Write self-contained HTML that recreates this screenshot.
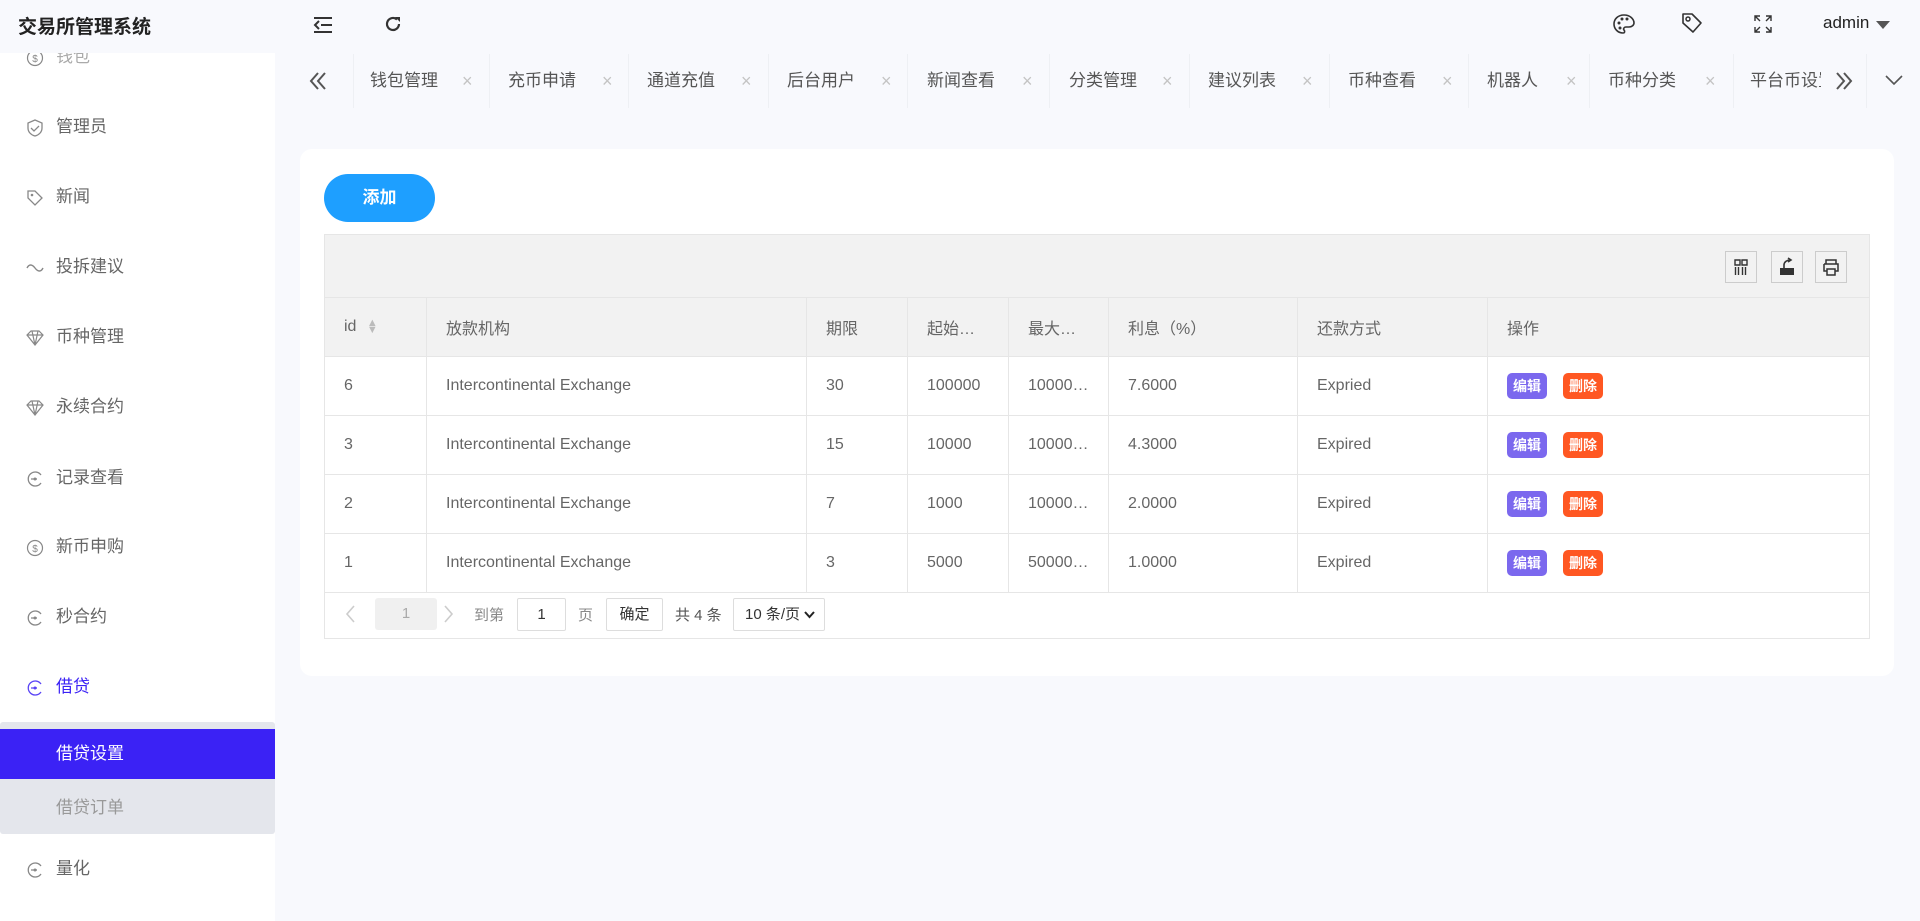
<!DOCTYPE html>
<html><head><meta charset="utf-8"><style>
*{box-sizing:border-box;margin:0;padding:0}
body{width:1920px;height:921px;overflow:hidden;background:#f8f9fd;font-family:"Liberation Sans","Noto Sans CJK SC",sans-serif;color:#333;position:relative}
.abs{position:absolute}
#hdr{left:0;top:0;width:1920px;height:53px;background:#f8f9fd}
#side{left:0;top:53px;width:275px;height:868px;background:#fff;overflow:hidden}
.mi{position:absolute;left:0;width:275px;height:40px;line-height:40px;font-size:17px;color:#666}
.mi svg{position:absolute;left:26px;top:12px}
.mi span{position:absolute;left:56px}
.tab{position:absolute;top:54px;height:54px;line-height:54px;font-size:17px;color:#555;border-left:1px solid #eef0f4}
.tab .x{position:absolute;color:#c4c4c4;font-size:18px}
#card{left:300px;top:149px;width:1594px;height:527px;background:#fff;border-radius:12px}
table{border-collapse:collapse;position:absolute;left:324px;top:297px;width:1546px;font-size:16px;color:#666}
td,th{border:1px solid #e6e6e6;height:59px;padding-left:19px;text-align:left;font-weight:normal;white-space:nowrap}
th{background:#f2f2f2;color:#666}
.b{display:inline-block;color:#fff;font-size:14px;font-weight:bold;border-radius:5px;height:26px;line-height:26px;padding:0 6px;margin-right:16px}
</style></head><body>
<div id="hdr" class="abs">
 <div class="abs" style="left:18px;top:12px;font-size:19px;font-weight:bold;color:#222">交易所管理系统</div>
 <svg class="abs" style="left:313px;top:16px" width="20" height="18" viewBox="0 0 20 18"><path d="M1 2h18M8 9h11M1 16h18M6 5L2 9l4 4" stroke="#333" stroke-width="2" fill="none"/></svg>
 <svg class="abs" style="left:383px;top:14px" width="20" height="20" viewBox="0 0 20 20"><path d="M16 10a6 6 0 1 1-2-4.5" stroke="#333" stroke-width="2.2" fill="none"/><path d="M12 3h5v5z" fill="#333"/></svg>
 <svg class="abs" style="left:1612px;top:13px" width="24" height="22" viewBox="0 0 24 22"><path d="M12 2C6 2 2 6 2 11s4 9 9 9c2 0 2-2 1-3s0-3 2-3h3c3 0 5-2 5-4 0-4-4-8-10-8z" stroke="#333" stroke-width="1.6" fill="none"/><circle cx="7" cy="10" r="1.5" fill="#333"/><circle cx="10" cy="6" r="1.5" fill="#333"/><circle cx="15" cy="6" r="1.5" fill="#333"/><circle cx="8" cy="15" r="1.5" fill="#333"/></svg>
 <svg class="abs" style="left:1681px;top:12px" width="22" height="24" viewBox="0 0 22 24"><path d="M2 2h9l9 9-8 9-10-9z" stroke="#333" stroke-width="1.6" fill="none" stroke-linejoin="round"/><circle cx="7" cy="7" r="2" stroke="#333" stroke-width="1.5" fill="none"/></svg>
 <svg class="abs" style="left:1754px;top:15px" width="18" height="18" viewBox="0 0 18 18"><path d="M1 6V1h5M1 1l5 5M17 6V1h-5M17 1l-5 5M1 12v5h5M1 17l5-5M17 12v5h-5M17 17l-5-5" stroke="#333" stroke-width="1.4" fill="none"/></svg>
 <div class="abs" style="left:1823px;top:13px;font-size:17px;color:#222">admin</div>
 <div class="abs" style="left:1876px;top:21px;border:7px solid transparent;border-top:8px solid #555"></div>
</div>
<div id="side" class="abs">
 <div class="mi" style="top:-16px"><svg width="18" height="18"><circle cx="9" cy="9" r="7.5" stroke="#888" stroke-width="1.2" fill="none"/><text x="9" y="13" font-size="10" text-anchor="middle" fill="#888">$</text></svg><span style="color:#aaa">钱包</span></div>
 <div class="mi" style="top:54px"><svg width="18" height="18"><path d="M9 1l7 3v5c0 4-3 7-7 8-4-1-7-4-7-8V4z M5 9l3 3 5-5" stroke="#888" stroke-width="1.3" fill="none"/></svg><span>管理员</span></div>
 <div class="mi" style="top:124px"><svg width="18" height="18"><path d="M2 2h7l7 7-7 7-7-7z" stroke="#888" stroke-width="1.3" fill="none"/><circle cx="6" cy="6" r="1.3" fill="#888"/></svg><span>新闻</span></div>
 <div class="mi" style="top:194px"><svg width="18" height="18"><path d="M1 9c2-4 5-4 8 0s6 4 8 0" stroke="#888" stroke-width="1.4" fill="none"/></svg><span>投拆建议</span></div>
 <div class="mi" style="top:264px"><svg width="18" height="18"><path d="M1 6l4-4h8l4 4-8 10zM1 6h16M6 2l3 14 3-14" stroke="#888" stroke-width="1.2" fill="none"/></svg><span>币种管理</span></div>
 <div class="mi" style="top:334px"><svg width="18" height="18"><path d="M1 6l4-4h8l4 4-8 10zM1 6h16M6 2l3 14 3-14" stroke="#888" stroke-width="1.2" fill="none"/></svg><span>永续合约</span></div>
 <div class="mi" style="top:405px"><svg width="18" height="18"><path d="M15 5A7 7 0 1 0 15 13M5 9h6" stroke="#888" stroke-width="1.3" fill="none"/><circle cx="9" cy="9" r="1.5" fill="#888"/></svg><span>记录查看</span></div>
 <div class="mi" style="top:474px"><svg width="18" height="18"><circle cx="9" cy="9" r="7.5" stroke="#888" stroke-width="1.2" fill="none"/><text x="9" y="13" font-size="10" text-anchor="middle" fill="#888">$</text></svg><span>新币申购</span></div>
 <div class="mi" style="top:544px"><svg width="18" height="18"><path d="M15 5A7 7 0 1 0 15 13M5 9h6" stroke="#888" stroke-width="1.3" fill="none"/><circle cx="9" cy="9" r="1.5" fill="#888"/></svg><span>秒合约</span></div>
 <div class="mi" style="top:614px;color:#3b22f5"><svg width="18" height="18"><path d="M15 5A7 7 0 1 0 15 13M5 9h6" stroke="#5a44f5" stroke-width="1.3" fill="none"/><circle cx="9" cy="9" r="1.5" fill="#5a44f5"/></svg><span>借贷</span></div>
 <div class="abs" style="left:0;top:669px;width:275px;height:112px;background:#e4e6ec;border-radius:3px"></div>
 <div class="abs" style="left:0;top:676px;width:275px;height:50px;background:#3b22f5"></div>
 <div class="mi" style="top:681px;color:#fff"><span>借贷设置</span></div>
 <div class="mi" style="top:735px;color:#999"><span>借贷订单</span></div>
 <div class="mi" style="top:796px"><svg width="18" height="18"><path d="M15 5A7 7 0 1 0 15 13M5 9h6" stroke="#888" stroke-width="1.3" fill="none"/><circle cx="9" cy="9" r="1.5" fill="#888"/></svg><span>量化</span></div>
</div>
<!-- tabs -->
<svg class="abs" style="left:308px;top:71px" width="20" height="20"><path d="M10 2L3 10l7 8M17 2l-7 8 7 8" stroke="#555" stroke-width="2" fill="none"/></svg>
<div class="tab" style="left:353px;width:136px"><span style="position:absolute;left:16px">钱包管理</span><span class="x" style="left:108px">×</span></div>
<div class="tab" style="left:489px;width:139px"><span style="position:absolute;left:18px">充币申请</span><span class="x" style="left:112px">×</span></div>
<div class="tab" style="left:628px;width:140px"><span style="position:absolute;left:18px">通道充值</span><span class="x" style="left:112px">×</span></div>
<div class="tab" style="left:768px;width:139px"><span style="position:absolute;left:18px">后台用户</span><span class="x" style="left:112px">×</span></div>
<div class="tab" style="left:907px;width:142px"><span style="position:absolute;left:19px">新闻查看</span><span class="x" style="left:114px">×</span></div>
<div class="tab" style="left:1049px;width:140px"><span style="position:absolute;left:19px">分类管理</span><span class="x" style="left:112px">×</span></div>
<div class="tab" style="left:1189px;width:140px"><span style="position:absolute;left:18px">建议列表</span><span class="x" style="left:112px">×</span></div>
<div class="tab" style="left:1329px;width:139px"><span style="position:absolute;left:18px">币种查看</span><span class="x" style="left:112px">×</span></div>
<div class="tab" style="left:1468px;width:121px"><span style="position:absolute;left:18px">机器人</span><span class="x" style="left:97px">×</span></div>
<div class="tab" style="left:1589px;width:144px"><span style="position:absolute;left:18px">币种分类</span><span class="x" style="left:115px">×</span></div>
<div class="tab" style="left:1733px;width:88px;overflow:hidden"><span style="position:absolute;left:16px;white-space:nowrap">平台币设置</span></div>
<div class="abs" style="left:1821px;top:54px;width:45px;height:54px;background:#f8f9fd"></div>
<svg class="abs" style="left:1834px;top:71px" width="20" height="20"><path d="M3 2l7 8-7 8M10 2l7 8-7 8" stroke="#555" stroke-width="2" fill="none"/></svg>
<div class="abs" style="left:1866px;top:54px;height:54px;border-left:1px solid #eef0f4"></div>
<svg class="abs" style="left:1885px;top:74px" width="18" height="12"><path d="M1 2l8 8 8-8" stroke="#555" stroke-width="1.6" fill="none"/></svg>
<!-- card -->
<div id="card" class="abs"></div>
<div class="abs" style="left:324px;top:174px;width:111px;height:48px;border-radius:24px;background:#1e9fff;color:#fff;font-size:17px;font-weight:bold;text-align:center;line-height:48px">添加</div>
<div class="abs" style="left:324px;top:234px;width:1546px;height:64px;background:#f2f2f2;border:1px solid #e6e6e6"></div>
<div class="abs" style="left:1725px;top:251px;width:32px;height:32px;border:1px solid #ccc"><svg width="30" height="30"><path d="M9 8h5v5H9zM16 8h5v5h-5zM9.5 15v8M12.5 15v8M16.5 15v8M19.5 15v8" stroke="#333" stroke-width="1.4" fill="none"/></svg></div>
<div class="abs" style="left:1771px;top:251px;width:32px;height:32px;border:1px solid #ccc"><svg width="30" height="30"><path d="M8 16h14v7H8z" fill="#333"/><path d="M12 16v-3c0-3 3-5 6-5M16 6l3 2-3 2" stroke="#333" stroke-width="1.6" fill="none"/></svg></div>
<div class="abs" style="left:1815px;top:251px;width:32px;height:32px;border:1px solid #ccc"><svg width="30" height="30"><path d="M10 12V8h10v4M8 12h14v7h-3M11 19H8v-7M11 17h8v6h-8z" stroke="#333" stroke-width="1.5" fill="none"/></svg></div>
<table>
<colgroup><col style="width:102px"><col style="width:380px"><col style="width:101px"><col style="width:101px"><col style="width:100px"><col style="width:189px"><col style="width:190px"><col></colgroup>
<tr><th style="height:58px">id <span style="color:#bbb;font-size:11px;display:inline-block;line-height:7px;vertical-align:middle;margin-left:6px">▲<br>▼</span></th><th>放款机构</th><th>期限</th><th>起始…</th><th>最大…</th><th>利息（%）</th><th>还款方式</th><th>操作</th></tr>
<tr><td>6</td><td>Intercontinental Exchange</td><td>30</td><td>100000</td><td>10000…</td><td>7.6000</td><td>Expried</td><td><span class="b" style="background:#7b68ee">编辑</span><span class="b" style="background:#ff5722">删除</span></td></tr>
<tr><td>3</td><td>Intercontinental Exchange</td><td>15</td><td>10000</td><td>10000…</td><td>4.3000</td><td>Expired</td><td><span class="b" style="background:#7b68ee">编辑</span><span class="b" style="background:#ff5722">删除</span></td></tr>
<tr><td>2</td><td>Intercontinental Exchange</td><td>7</td><td>1000</td><td>10000…</td><td>2.0000</td><td>Expired</td><td><span class="b" style="background:#7b68ee">编辑</span><span class="b" style="background:#ff5722">删除</span></td></tr>
<tr><td>1</td><td>Intercontinental Exchange</td><td>3</td><td>5000</td><td>50000…</td><td>1.0000</td><td>Expired</td><td><span class="b" style="background:#7b68ee">编辑</span><span class="b" style="background:#ff5722">删除</span></td></tr>
</table>
<div class="abs" style="left:324px;top:589px;width:1546px;height:50px;border:1px solid #e6e6e6;border-top:none"></div>
<svg class="abs" style="left:344px;top:604px" width="14" height="20"><path d="M10 2L3 10l7 8" stroke="#ccc" stroke-width="1.6" fill="none"/></svg>
<div class="abs" style="left:375px;top:598px;width:62px;height:32px;background:#f0f0f0;border-radius:3px;text-align:center;line-height:32px;font-size:15px;color:#aaa">1</div>
<svg class="abs" style="left:441px;top:604px" width="14" height="20"><path d="M4 2l7 8-7 8" stroke="#ccc" stroke-width="1.6" fill="none"/></svg>
<div class="abs" style="left:474px;top:604px;font-size:15px;color:#888">到第</div>
<div class="abs" style="left:517px;top:598px;width:49px;height:33px;border:1px solid #ddd;border-radius:2px;text-align:center;line-height:31px;font-size:15px;color:#333">1</div>
<div class="abs" style="left:578px;top:604px;font-size:15px;color:#888">页</div>
<div class="abs" style="left:606px;top:598px;width:57px;height:33px;border:1px solid #ddd;border-radius:2px;text-align:center;line-height:31px;font-size:15px;color:#333">确定</div>
<div class="abs" style="left:675px;top:604px;font-size:15px;color:#555">共 4 条</div>
<div class="abs" style="left:733px;top:598px;width:92px;height:33px;border:1px solid #ddd;border-radius:2px;line-height:31px;font-size:15px;color:#333;padding-left:11px">10 条/页 <svg width="11" height="8" style="vertical-align:middle"><path d="M1 1l4.5 5L10 1" stroke="#222" stroke-width="2" fill="none"/></svg></div>
</body></html>
